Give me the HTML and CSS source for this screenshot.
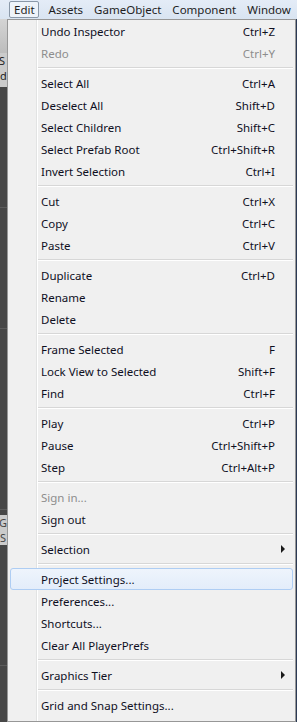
FILE: index.html
```html
<!DOCTYPE html>
<html lang="en">
<head>
    <meta charset="UTF-8">
    <title>Edit menu</title>
    <link rel="stylesheet" href="styles.css">
</head>
<body>
    <div class="menubar">
        <span class="top-item open">Edit</span>
        <span class="top-item">Assets</span>
        <span class="top-item">GameObject</span>
        <span class="top-item">Component</span>
        <span class="top-item">Window</span>
    </div>

    <div class="editor">
        <div class="strip">
            <div class="tool light"></div>
            <div class="tool pale">S<br>d</div>
            <div class="panel"></div>
            <div class="panel"></div>
            <div class="panel tall"></div>
            <div class="tool pale low">G<br>S</div>
            <div class="panel"></div>
        </div>
    </div>

    <div class="menu">
        <div class="item"><span>Undo Inspector</span><span>Ctrl+Z</span></div>
        <div class="item disabled"><span>Redo</span><span>Ctrl+Y</span></div>
        <div class="sep"></div>
        <div class="item"><span>Select All</span><span>Ctrl+A</span></div>
        <div class="item"><span>Deselect All</span><span>Shift+D</span></div>
        <div class="item"><span>Select Children</span><span>Shift+C</span></div>
        <div class="item"><span>Select Prefab Root</span><span>Ctrl+Shift+R</span></div>
        <div class="item"><span>Invert Selection</span><span>Ctrl+I</span></div>
        <div class="sep"></div>
        <div class="item"><span>Cut</span><span>Ctrl+X</span></div>
        <div class="item"><span>Copy</span><span>Ctrl+C</span></div>
        <div class="item"><span>Paste</span><span>Ctrl+V</span></div>
        <div class="sep"></div>
        <div class="item"><span>Duplicate</span><span>Ctrl+D</span></div>
        <div class="item"><span>Rename</span></div>
        <div class="item"><span>Delete</span></div>
        <div class="sep"></div>
        <div class="item"><span>Frame Selected</span><span>F</span></div>
        <div class="item"><span>Lock View to Selected</span><span>Shift+F</span></div>
        <div class="item"><span>Find</span><span>Ctrl+F</span></div>
        <div class="sep"></div>
        <div class="item"><span>Play</span><span>Ctrl+P</span></div>
        <div class="item"><span>Pause</span><span>Ctrl+Shift+P</span></div>
        <div class="item"><span>Step</span><span>Ctrl+Alt+P</span></div>
        <div class="sep"></div>
        <div class="item disabled"><span>Sign in...</span></div>
        <div class="item"><span>Sign out</span></div>
        <div class="sep"></div>
        <div class="item"><span>Selection</span><span class="arrow"></span></div>
        <div class="sep"></div>
        <div class="item hover"><span>Project Settings...</span></div>
        <div class="item"><span>Preferences...</span></div>
        <div class="item"><span>Shortcuts...</span></div>
        <div class="item"><span>Clear All PlayerPrefs</span></div>
        <div class="sep"></div>
        <div class="item"><span>Graphics Tier</span><span class="arrow"></span></div>
        <div class="sep"></div>
        <div class="item"><span>Grid and Snap Settings...</span></div>
    </div>
</body>
</html>
```

FILE: styles.css
```css
body {
    margin: 0;
    width: 297px;
    height: 722px;
    overflow: hidden;
    background-color: #2b3a55;
    font-family: "Noto Sans", "Open Sans", Arial, sans-serif;
    font-size: 11.5px;
    color: #000;
    position: relative;
}
.menubar {
    height: 19px;
    display: flex;
    align-items: center;
    gap: 11px;
    padding-left: 9px;
    background: linear-gradient(#e4ecf7, #d9e4f1);
    white-space: nowrap;
}
.top-item {
    line-height: 15px;
    color: #1e1e1e;
}
.top-item.open {
    margin-right: -1px;
    padding: 0 3px 0 4px;
    border: 1px solid #8a98a8;
    border-radius: 2px;
    background-color: #eef3f9;
}
.editor {
    height: 703px;
    display: flex;
}
.strip {
    width: 7px;
    display: flex;
    flex-direction: column;
    background-color: #474747;
}
.tool {
    font-size: 11px;
    line-height: 15px;
    overflow: hidden;
    text-indent: -1px;
}
.tool.light {
    height: 34px;
    background: linear-gradient(#d4d4d4, #bdbdbd);
}
.tool.pale {
    height: 34px;
    background-color: #cbcbcb;
    color: #222;
}
.tool.low {
    height: 30px;
    margin-top: 5px;
    color: #444;
}
.panel {
    height: 120px;
    border-bottom: 1px solid #5c5c5c;
    background-color: #474747;
}
.panel.tall {
    height: 180px;
}
.menu {
    position: absolute;
    left: 7px;
    top: 19px;
    width: 287px;
    height: 701px;
    border: 1px solid #979797;
    background: linear-gradient(to right, transparent 28px, #e2e3e3 28px, #e2e3e3 29px, #fff 29px, #fff 30px, transparent 30px), #f0f0f0;
}
.item {
    height: 22px;
    display: flex;
    align-items: center;
    justify-content: space-between;
    padding: 0 20px 0 33px;
    white-space: nowrap;
    color: #0f0f1e;
}
.item.disabled {
    color: #8d8d8d;
}
.item.hover {
    margin: 0 2px;
    height: 20px;
    padding: 0 18px 0 30px;
    border: 1px solid #aecdf3;
    border-radius: 3px;
    background: linear-gradient(#eef4fc, #e3edfa);
}
.arrow {
    width: 0;
    height: 0;
    margin-right: -10px;
    border-top: 4px solid transparent;
    border-bottom: 4px solid transparent;
    border-left: 4px solid #1a1a1a;
}
.sep {
    height: 1px;
    margin: 3px 2px 3px 30px;
    border-top: 1px solid #d7d7d7;
    background-color: #fff;
}
```
